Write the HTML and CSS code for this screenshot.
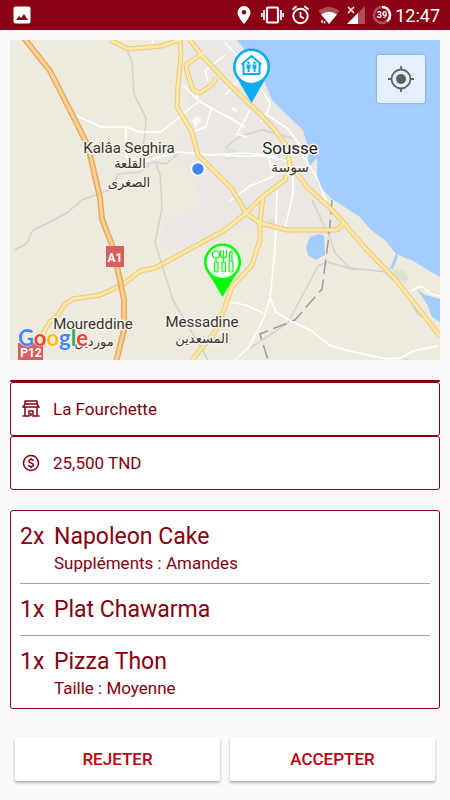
FILE: index.html
```html
<!DOCTYPE html>
<html lang="fr">

<head>
    <meta charset="utf-8">
    <meta name="viewport" content="width=device-width, initial-scale=1.0">
    <title>Commande</title>
    <link rel="stylesheet" href="styles.css">
</head>

<body>
    <header class="statusbar">
        <svg class="status-photo" width="18" height="18" viewBox="0 0 18 18">
            <rect x="0.5" y="0.5" width="17" height="17" rx="2" fill="#fff"/>
            <path d="M3 14l3-4 2 2 3-4 4 6z" fill="#8b0014"/>
        </svg>
        <svg class="status-icons" width="158" height="22" viewBox="0 0 158 22">
            <!-- location -->
            <path fill="#fff" fill-rule="evenodd" d="M7 2a6.500 6.500 0 0 0-6.500 6.500C.5 13 7 20 7 20s6.500-7 6.500-11.500A6.500 6.500 0 0 0 7 2zm0 4a2.300 2.300 0 1 1 0 4.600A2.300 2.300 0 0 1 7 6z"/>
            <!-- vibrate -->
            <rect x="30" y="3.500" width="11" height="15" rx="1" fill="none" stroke="#fff" stroke-width="2.200"/>
            <path d="M27 6v10M24.800 9v4M44 6v10M46.200 9v4" stroke="#fff" stroke-width="1.700"/>
            <!-- alarm -->
            <circle cx="63.500" cy="12" r="7.200" fill="none" stroke="#fff" stroke-width="2"/>
            <path d="M63.500 8v4.500l3.500 2M55.500 5.500l4-3.300M71.500 5.500l-4-3.300" fill="none" stroke="#fff" stroke-width="1.800"/>
            <!-- wifi -->
            <path d="M92 20L81.500 7Q92-1 102.500 7z" fill="#fff" opacity=".3"/>
            <path d="M92 20l-8-9.500Q92 5 100 10.500z" fill="#fff"/>
            <path d="M85 16v3M87.500 17v2.500" stroke="#fff" stroke-width="1.500"/>
            <!-- signal -->
            <path d="M128 2v18h-18z" fill="#fff" opacity=".3"/>
            <path d="M121 9v11h-11z" fill="#fff"/>
            <path d="M111 3l6 6m0-6l-6 6" stroke="#fff" stroke-width="1.500"/>
            <!-- battery -->
            <circle cx="145" cy="11" r="8" fill="none" stroke="#fff" stroke-width="2.500" opacity=".3"/>
            <path d="M145 3a8 8 0 0 1 5 14.200" fill="none" stroke="#fff" stroke-width="2.500"/>
            <text class="battery" x="145" y="14" text-anchor="middle">39</text>
        </svg>
        <span class="clock">12:47</span>
    </header>

    <main>
        <div class="map">
            <svg class="map-canvas" viewBox="10 40 430 320">
                <rect x="10" y="40" width="430" height="320" fill="#eeeade"/>
                <!-- built-up area -->
                <path class="urban" d="M182 40h60l78 105 12 57 20 20-10 20-30-5-45-8-25 3-30 10-50 10-3-15 12-20 30-14-6-20-18-20-6-15 18-20z"/>
                <path class="park" d="M225 148l12 2-2 9-10 1zM267 220l7-3 2 6-6 4zM395 268l9 2 5 8-4 4-13-5zM402 358l6 0 2 2h-8z"/>
                <!-- sea and lakes -->
                <path class="water" d="M237 40l20 25 8 18 7 17 13 13 18 17 3 11 5 10-6 11 5 3 7-7v25l8 9 7 7 28 18 10 12 16 12 10 13 17 7 27 16V40zM319 234l5 2 1 19-9 5-8-5-2-8 4-10zM396 253l-6 16 3 0 5-12zM417 289l8 6 15 4v23l-8-5-5-13z"/>
                <!-- railways and minor tracks -->
                <path class="track" d="M127 50l5 12 2 32 12 24-1 16-4 24M146 164l10-2 10 2 14-12M156 164l4 10 2 34-7 35 18 57 35 60M150 165l-10 7-22 2-6 15-30 11-14 12-18 10-17 8-6 13-12 7"/>
                <path class="track" d="M225 148l15-12 22-6 30 8M312 200l18 38 5 15 15 15 20 2 15 2 18 17 15 25 14 9M250 348l38-25 30-57 10-4 27 8"/>
                <path class="border-line" d="M332 200l-3 35-7 54-27 31-35 14 8 26"/>
                <!-- streets -->
                <path class="street" d="M75 115l26 12h26l12 5h22l38-31 28 16M126 127v30l14 5 40-10 30 3 35-2 30 3M183 85l15 15M198 100l-1-6M211 109l-5 18-14 5M225 55l-20 16 3 10M153 40v10M225 43l20 20 25 40-3 12 20 13 18 24 4 16M225 115l20 12M225 95l15-17 16-18M250 110l-13 24 10 3M267 112l-6 10M225 156h40l25 5M268 156l6 20-24 10-20 15M293 168v25l-8 36M277 190l-2 60-5 48-6 20-15 29-14 13M270 298l6 14 15 9 21 10 17 14 20 6 38 8 14-1 12-7 25-5M228 302l18 3 17 8M303 156l14 22 9 23M411 291l10-5 10 8 9 2M232 108l5 3"/>
                <path class="block" d="M192 120l6-4 3 4-6 9z"/>
                <!-- main roads -->
                <path class="road-edge" d="M110 40l18 9 34-3 17-6M180 40l1 15-3 30-1 22 15 25 6 23 12 12 22 22 14 24 14 10 27 7h50l7-7M190 40l13 17 22 23 15 15 18 17 17 18 11 15 4 20 18 23 22 20 14 15 21 25 30 31 23 29 22 28M203 53l-17 12 2 10 5 15 7 3 13-9 3-6M290 165l-5 15-23 17-17 17-20 16-70 38-15 3-18 14-22 10-27 4-8 5-7 11-8 7-7 11v14M263 197l-3 25v18l-8 25-20 22-10 28-7 17-23 28"/>
                <path class="road" d="M110 40l18 9 34-3 17-6M180 40l1 15-3 30-1 22 15 25 6 23 12 12 22 22 14 24 14 10 27 7h50l7-7M190 40l13 17 22 23 15 15 18 17 17 18 11 15 4 20 18 23 22 20 14 15 21 25 30 31 23 29 22 28M203 53l-17 12 2 10 5 15 7 3 13-9 3-6M290 165l-5 15-23 17-17 17-20 16-70 38-15 3-18 14-22 10-27 4-8 5-7 11-8 7-7 11v14M263 197l-3 25v18l-8 25-20 22-10 28-7 17-23 28"/>
                <path class="motorway-edge" d="M24 38l26 33 23 45 15 30 12 52 2 21 10 26 8 35 4 20v30l-8 32"/>
                <path class="motorway" d="M24 38l26 33 23 45 15 30 12 52 2 21 10 26 8 35 4 20v30l-8 32"/>

                <rect class="shield" x="106" y="246" width="18" height="21"/>
                <text class="shield-text" x="115" y="262">A1</text>
                <rect class="shield" x="18" y="343" width="25" height="17"/>
                <text class="shield-text" x="31" y="357">P12</text>

                <text class="place" x="129" y="153">Kalâa Seghira</text>
                <text class="place arabic" x="130" y="168">القلعة</text>
                <text class="place arabic" x="129" y="187">الصغرى</text>
                <text class="place city" x="290" y="154">Sousse</text>
                <text class="place arabic city-arabic" x="290" y="172">سوسة</text>
                <text class="place" x="93" y="329">Moureddine</text>
                <text class="place arabic" x="94" y="346">موردين</text>
                <text class="place" x="202" y="327">Messadine</text>
                <text class="place arabic" x="202" y="343">المسعدين</text>

                <!-- own position -->
                <circle cx="198" cy="169" r="6.500" fill="#4285f4" stroke="#fff" stroke-width="1.500"/>

                <!-- customer pin -->
                <g>
                    <path d="M236 76h31l-15.500 27z" fill="#09aef0"/>
                    <circle cx="251.500" cy="67" r="17.200" fill="#fff" stroke="#09aef0" stroke-width="2.600"/>
                    <path d="M241.500 64.500l10-8.500 10 8.500M243.500 63v11h16V63" fill="none" stroke="#09aef0" stroke-width="2"/>
                    <g fill="#09aef0">
                        <circle cx="248.500" cy="62.800" r="1.300"/>
                        <path d="M246.500 64.500h4v4h-1V72h-2v-3.500h-1z"/>
                        <circle cx="254.500" cy="62.800" r="1.300"/>
                        <path d="M252.500 64.500h4v4h-1V72h-2v-3.500h-1z"/>
                    </g>
                </g>

                <!-- restaurant pin -->
                <g>
                    <path d="M207 271h31l-15.500 26z" fill="#0f0"/>
                    <circle cx="222.500" cy="262" r="17.200" fill="#fff" stroke="#0f0" stroke-width="2.600"/>
                    <g fill="none" stroke="#0f0" stroke-width="1.200">
                        <circle cx="216" cy="254.500" r="3.500"/>
                        <path d="M216 258v4"/>
                        <rect x="214.500" y="262" width="3.500" height="10" rx="1.500"/>
                        <path d="M220.500 250v5q0 3 3 3t3-3v-5M223.500 250v12"/>
                        <rect x="222" y="262" width="3.500" height="10" rx="1.500"/>
                        <path d="M229.500 261v-7q0-3 2.500-3v10"/>
                        <rect x="229" y="261" width="4" height="11" rx="1.500"/>
                    </g>
                </g>

                <text class="google" x="18" y="346"><tspan fill="#4285f4">G</tspan><tspan fill="#ea4335">o</tspan><tspan fill="#fbbc05">o</tspan><tspan fill="#4285f4">g</tspan><tspan fill="#34a853">l</tspan><tspan fill="#ea4335">e</tspan></text>
            </svg>
            <button class="locate" type="button" aria-label="Ma position">
                <svg width="28" height="28" viewBox="0 0 28 28">
                    <circle cx="14" cy="14" r="9.500" fill="none" stroke="#5f6368" stroke-width="1.800"/>
                    <circle cx="14" cy="14" r="5" fill="#5f5f5f"/>
                    <path d="M14 1v4M14 23v4M1 14h4M23 14h4" stroke="#5f6368" stroke-width="1.800"/>
                </svg>
            </button>
        </div>

        <div class="infos">
            <div class="info">
                <svg width="18" height="18" viewBox="0 0 18 18" fill="none" stroke="#85000f" stroke-width="1.500">
                    <path d="M3 1h12M3 4h12M3 .5v3.500L1.200 7h15.600L15 4V.5M3 7v9M15 7v9M.5 16h6.500v-5h4v5h6.500M9 13v3"/>
                </svg>
                <span>La Fourchette</span>
            </div>
            <div class="info">
                <svg width="18" height="18" viewBox="0 0 18 18" fill="none" stroke="#85000f" stroke-width="1.500">
                    <circle cx="9" cy="9" r="7.500"/>
                    <path d="M11.300 7Q11 5.500 9 5.500T6.800 7.200Q6.800 8.500 9 9t2.300 1.900Q11.300 12.500 9 12.500T6.700 11M9 4v1.500M9 12.500V14"/>
                </svg>
                <span>25,500 TND</span>
            </div>
        </div>

        <ul class="items">
            <li class="item">
                <span class="qty">2x</span>
                <span class="name">Napoleon Cake</span>
                <span class="extra">Suppléments : Amandes</span>
            </li>
            <li class="item">
                <span class="qty">1x</span>
                <span class="name">Plat Chawarma</span>
            </li>
            <li class="item">
                <span class="qty">1x</span>
                <span class="name">Pizza Thon</span>
                <span class="extra">Taille : Moyenne</span>
            </li>
        </ul>

        <div class="actions">
            <button class="button" type="button">REJETER</button>
            <button class="button" type="button">ACCEPTER</button>
        </div>
    </main>
</body>

</html>
```
FILE: styles.css
```css
* {
  box-sizing: border-box;
}
body {
  margin: 0;
  background-color: #fafafa;
  color: #85000f;
  font-family: Roboto, Arial, sans-serif;
}
.statusbar {
  display: flex;
  align-items: center;
  height: 30px;
  padding: 0 10px 0 13px;
  background-color: #8b0014;
  color: white;
}
.status-icons {
  margin-left: auto;
}
.battery {
  font-size: 9px;
  font-weight: bold;
  fill: white;
}
.clock {
  font-size: 18px;
}
main {
  padding: 10px;
}

/* map */
.map {
  position: relative;
}
.map-canvas {
  display: block;
  width: 100%;
}
.urban { fill: #ebe8e4; }
.park { fill: #dae5cf; }
.water { fill: #a3ccff; }
.block { fill: #f8f8f8; }
.track, .street, .border-line,
.road, .road-edge, .motorway, .motorway-edge {
  fill: none;
  stroke-linejoin: round;
}
.track {
  stroke: #d2d2d0;
  stroke-width: 1.5;
}
.border-line {
  stroke: #9a9a9e;
  stroke-width: 1.5;
  stroke-dasharray: 14 6;
}
.street {
  stroke: white;
  stroke-width: 1.5;
}
.road-edge {
  stroke: #e8ca80;
  stroke-width: 5;
}
.road {
  stroke: #ffe8a4;
  stroke-width: 3;
}
.motorway-edge {
  stroke: #e8a862;
  stroke-width: 6;
}
.motorway {
  stroke: #ffd292;
  stroke-width: 3;
}
.shield {
  fill: #d85f5f;
}
.shield-text {
  font-size: 12px;
  font-weight: bold;
  fill: white;
  text-anchor: middle;
}
.place {
  font-size: 15px;
  fill: #38332c;
  text-anchor: middle;
  stroke: #f7f5ee;
  stroke-width: 3;
  stroke-linejoin: round;
  paint-order: stroke;
}
.city {
  font-size: 17px;
  fill: #222;
}
.arabic {
  font-family: "DejaVu Sans", sans-serif;
  font-size: 13px;
}
.city-arabic {
  font-size: 14px;
}
.google {
  font-family: Lato, sans-serif;
  font-size: 22px;
  font-weight: bold;
  stroke: white;
  stroke-width: 1;
  paint-order: stroke;
}
.locate {
  position: absolute;
  top: 15px;
  right: 15px;
  display: flex;
  align-items: center;
  justify-content: center;
  width: 48px;
  height: 48px;
  padding: 0;
  border: none;
  border-radius: 2px;
  background-color: #e5effd;
  box-shadow: 0 0 2px rgba(0, 0, 0, 0.4);
  cursor: pointer;
}

/* restaurant and price */
.infos {
  margin-top: 20px;
}
.infos::before {
  content: "";
  display: block;
  height: 2px;
  border-radius: 3px;
  background-color: #85000f;
}
.info {
  display: flex;
  align-items: center;
  gap: 13px;
  height: 54px;
  padding: 0 11px;
  border: 1px solid #85000f;
  border-radius: 3px;
  background-color: white;
  font-size: 17px;
}

/* ordered items */
.items {
  margin: 20px 0 0;
  padding: 0 9px;
  border: 1px solid #85000f;
  border-radius: 3px;
  background-color: white;
  list-style: none;
}
.item {
  display: grid;
  grid-template-columns: 34px 1fr;
  padding: 12px 0 9px;
}
.item + .item {
  border-top: 1px solid #c09a9e;
}
.qty, .name {
  font-size: 23px;
  line-height: 28px;
}
.extra {
  grid-column: 2;
  margin-top: 1px;
  font-size: 17px;
  line-height: 22px;
}
.item:nth-child(2) {
  padding-bottom: 11px;
}

/* buttons */
.actions {
  display: flex;
  gap: 10px;
  padding: 28px 5px 0;
}
.button {
  flex: 1;
  height: 44px;
  border: none;
  border-radius: 2px;
  background-color: white;
  box-shadow: 0 2px 3px rgba(0, 0, 0, 0.3);
  color: #c0000a;
  font-family: inherit;
  font-size: 17px;
  font-weight: 500;
  cursor: pointer;
}
```
